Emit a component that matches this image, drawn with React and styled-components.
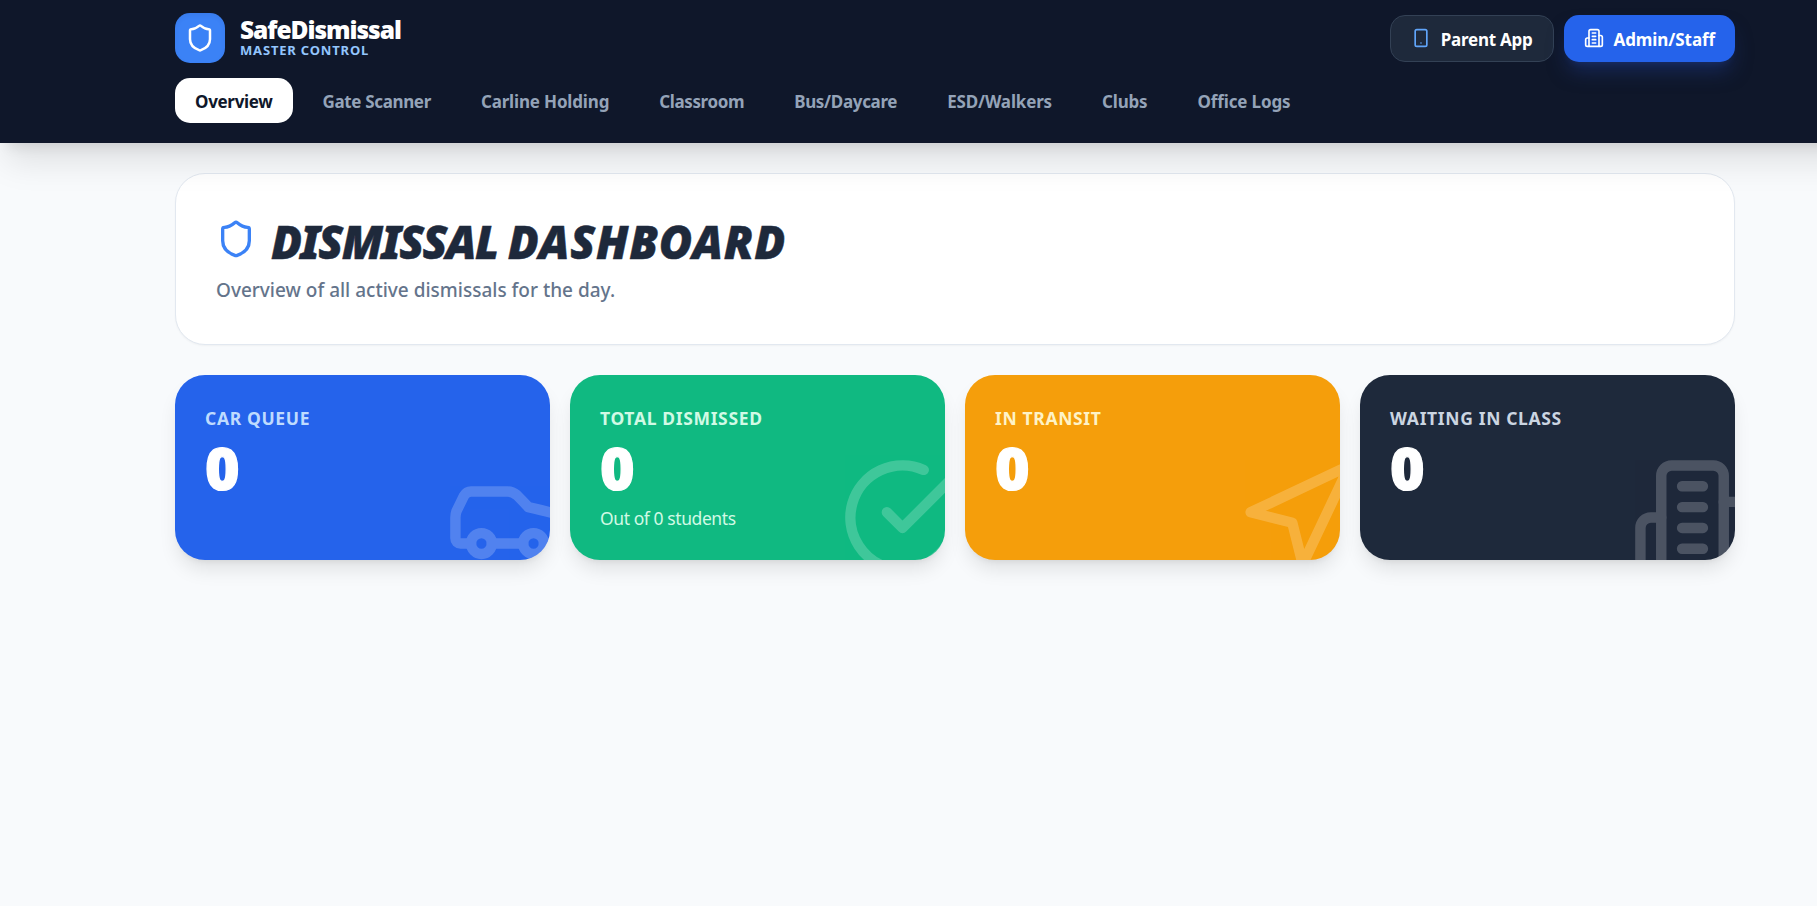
import styled, { createGlobalStyle } from 'styled-components';
import { Car, Navigation, Shield, Smartphone } from 'lucide-react';


const tabs = [
  { name: 'Overview', spacing: -0.31 },
  { name: 'Gate Scanner', spacing: -0.36 },
  { name: 'Carline Holding', spacing: -0.16 },
  { name: 'Classroom', spacing: -0.38 },
  { name: 'Bus/Daycare', spacing: -0.33 },
  { name: 'ESD/Walkers', spacing: -0.16 },
  { name: 'Clubs', spacing: -0.16 },
  { name: 'Office Logs', spacing: -0.13 },
];

const stats = [
  { label: 'Car Queue', value: 0, icon: Car, bg: '#2563eb', color: '#bfdbfe' },
  { label: 'Total Dismissed', value: 0, icon: CheckCircle, bg: '#10b981', color: '#d1fae5', note: 'Out of 0 students' },
  { label: 'In Transit', value: 0, icon: Navigation, bg: '#f59e0b', color: '#fef3c7' },
  { label: 'Waiting in Class', value: 0, icon: Building, bg: '#1e293b', color: '#cbd5e1' },
];


export default function App() {
  return (
    <Page>
      <GlobalStyle />
      <Header>
        <TopRow>
          <Brand>
            <Logo>
              <Shield size={30} />
            </Logo>
            <div>
              <BrandName>SafeDismissal</BrandName>
              <BrandSub>Master Control</BrandSub>
            </div>
          </Brand>
          <Actions>
            <ActionButton>
              <Smartphone size={20} color="#60a5fa" />
              <ActionText $spacing={-0.25}>Parent App</ActionText>
            </ActionButton>
            <ActionButton $primary>
              <Building size={20} />
              <ActionText $spacing={-0.08}>Admin/Staff</ActionText>
            </ActionButton>
          </Actions>
        </TopRow>
        <Nav>
          {tabs.map((tab, i) => (
            <Tab key={tab.name} $active={i === 0} $spacing={tab.spacing}>{tab.name}</Tab>
          ))}
        </Nav>
      </Header>

      <Main>
        <Panel>
          <TitleRow>
            <Shield size={40} color="#3b82f6" />
            <Title>
              <Word $spacing={-1.6}>Dismissal </Word>
              <Word $spacing={0.8}>Dashboard</Word>
            </Title>
          </TitleRow>
          <Subtitle>Overview of all active dismissals for the day.</Subtitle>
        </Panel>
        <Stats>
          {stats.map(({ label, value, icon: Icon, bg, color, note }) => (
            <Card key={label} $bg={bg}>
              <Label $color={color}>{label}</Label>
              <Value>{value}</Value>
              {note && <Note $color={color}>{note}</Note>}
              <Watermark>
                <Icon size={125} />
              </Watermark>
            </Card>
          ))}
        </Stats>
      </Main>
    </Page>
  )
}


function Building({ size }) {
  return (
    <Svg width={size} height={size} viewBox="0 0 24 24">
      <path d="M6 22V4a2 2 0 0 1 2-2h8a2 2 0 0 1 2 2v18Z" />
      <path d="M6 12H4a2 2 0 0 0-2 2v6a2 2 0 0 0 2 2h2" />
      <path d="M18 9h2a2 2 0 0 1 2 2v9a2 2 0 0 1-2 2h-2" />
      <path d="M10 6h4M10 10h4M10 14h4M10 18h4" />
    </Svg>
  )
}

function CheckCircle({ size }) {
  return (
    <Svg width={size} height={size} viewBox="0 0 24 24">
      <path d="M22 11.08V12a10 10 0 1 1-5.93-9.14" />
      <path d="m9 11 3 3L22 4" />
    </Svg>
  )
}


const GlobalStyle = createGlobalStyle`
* {
  box-sizing: border-box;
  margin: 0;
  padding: 0;
}
body {
  background-color: #f8fafc;
  font-family: "Noto Sans", "Open Sans", sans-serif;
}
svg {
  display: block;
  flex-shrink: 0;
}
button {
  border: none;
  font-family: inherit;
  cursor: pointer;
}
`;


const Svg = styled.svg`
fill: none;
stroke: currentColor;
stroke-width: 2;
stroke-linecap: round;
stroke-linejoin: round;
`;


const Page = styled.div`
min-height: 100vh;
overflow: hidden;
`;


/* bleeds off the right edge so the shadow only fades on the left */
const Header = styled.header`
position: relative;
z-index: 1;
height: 143px;
margin-right: -60px;
padding: 13px 142px 20px 175px;
background-color: #0f172a;
color: #fff;
box-shadow: 0 25px 31.25px -6.25px rgba(0, 0, 0, 0.1), 0 10px 12.5px -7.5px rgba(0, 0, 0, 0.1);
`;


const TopRow = styled.div`
display: flex;
align-items: center;
justify-content: space-between;
height: 50px;
`;


const Brand = styled.div`
display: flex;
align-items: center;
gap: 15px;
`;


const Logo = styled.div`
display: flex;
align-items: center;
justify-content: center;
width: 50px;
height: 50px;
border-radius: 15px;
background-color: #3b82f6;
box-shadow: inset 0 2.5px 5px rgba(0, 0, 0, 0.05);
`;


const BrandName = styled.h1`
font-size: 24.5px;
font-weight: 900;
line-height: 24px;
letter-spacing: -1.03px;
`;


const BrandSub = styled.p`
color: #93c5fd;
font-size: 13px;
font-weight: 700;
line-height: 16px;
letter-spacing: 0.82px;
text-transform: uppercase;
`;


const Actions = styled.div`
display: flex;
gap: 10px;
`;


const ActionButton = styled.button`
display: flex;
align-items: center;
gap: 10px;
height: 47px;
padding: 0 20px;
border: ${({ $primary }) => ($primary ? 'none' : '1px solid #334155')};
border-radius: 15px;
background-color: ${({ $primary }) => ($primary ? '#2563eb' : '#1e293b')};
color: #fff;
box-shadow: ${({ $primary }) => ($primary ? '0 12.5px 18.75px -3.75px rgba(30, 58, 138, 0.5), 0 5px 7.5px -5px rgba(30, 58, 138, 0.5)' : 'none')};
`;


const ActionText = styled.span`
padding-top: 2px;
font-size: 17px;
font-weight: 700;
line-height: 25px;
letter-spacing: ${({ $spacing }) => $spacing}px;
`;


const Nav = styled.nav`
display: flex;
gap: 10px;
margin-top: 15px;
`;


const Tab = styled.button`
height: 45px;
padding: 11px 20px 9px;
border-radius: 15px;
background-color: ${({ $active }) => ($active ? '#fff' : 'transparent')};
color: ${({ $active }) => ($active ? '#0f172a' : '#94a3b8')};
font-size: 17px;
font-weight: 700;
line-height: 25px;
letter-spacing: ${({ $spacing }) => $spacing}px;
white-space: nowrap;
`;


const Main = styled.main`
display: flex;
flex-direction: column;
gap: 30px;
padding: 30px 82px 30px 175px;
`;


const Panel = styled.section`
height: 172px;
padding: 40px;
border: 1px solid #e2e8f0;
border-radius: 30px;
background-color: #fff;
box-shadow: 0 1px 2px rgba(0, 0, 0, 0.04);
`;


const TitleRow = styled.div`
display: flex;
align-items: center;
gap: 15px;
height: 50px;
`;


const Title = styled.h2`
padding-top: 3px;
color: #1e293b;
font-size: 45.5px;
font-style: italic;
font-weight: 900;
line-height: 50px;
text-transform: uppercase;
white-space: pre;
-webkit-text-stroke: 0.5px #1e293b;
`;


const Word = styled.span`
letter-spacing: ${({ $spacing }) => $spacing}px;
`;


const Subtitle = styled.p`
margin-top: 10px;
padding-top: 1px;
color: #64748b;
font-size: 19px;
font-weight: 500;
line-height: 30px;
`;


const Stats = styled.section`
display: grid;
grid-template-columns: repeat(4, 1fr);
gap: 20px;
`;


const Card = styled.article`
position: relative;
height: 185px;
padding: 30px;
overflow: hidden;
border-radius: 30px;
background-color: ${({ $bg }) => $bg};
color: #fff;
box-shadow: 0 12.5px 18.75px -3.75px rgba(0, 0, 0, 0.1), 0 5px 7.5px -5px rgba(0, 0, 0, 0.1);
`;


const Label = styled.h3`
height: 25px;
color: ${({ $color }) => $color};
font-size: 17.5px;
font-weight: 700;
line-height: 26px;
letter-spacing: 0.65px;
text-transform: uppercase;
`;


const Value = styled.p`
height: 60px;
margin-top: 7px;
font-size: 59px;
font-weight: 900;
line-height: 60px;
-webkit-text-stroke: 1.2px #fff;
`;


const Note = styled.p`
margin-top: 8px;
color: ${({ $color }) => $color};
font-size: 17.5px;
line-height: 27px;
letter-spacing: -0.42px;
`;


const Watermark = styled.div`
position: absolute;
right: -20px;
bottom: -20px;
opacity: 0.2;
`;
